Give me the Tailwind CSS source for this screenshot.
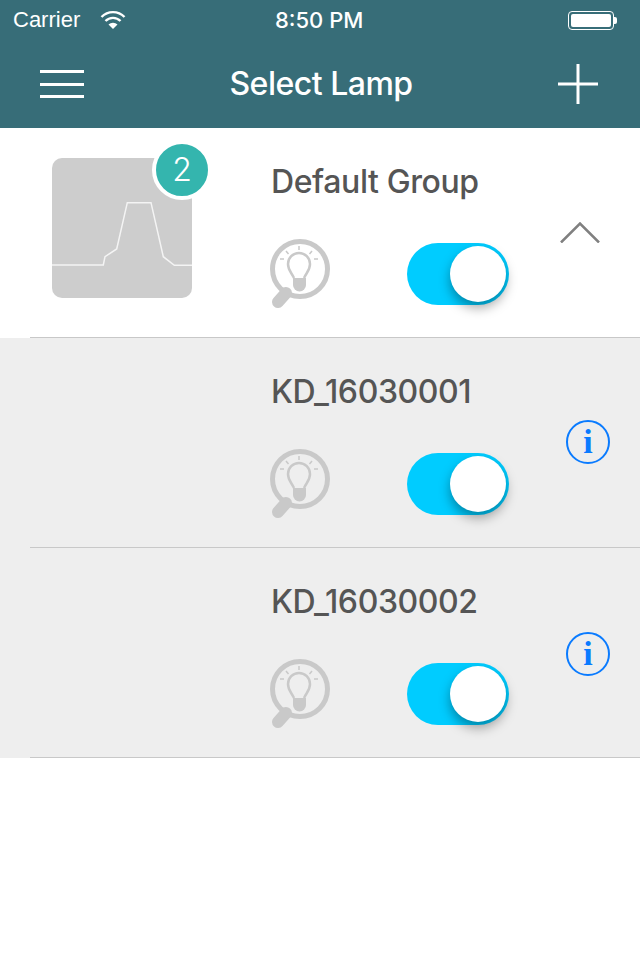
<!DOCTYPE html>
<html lang="en">
<head>
  <meta charset="UTF-8">
  <title>Select Lamp</title>
  <script src="https://cdn.jsdelivr.net/npm/@tailwindcss/browser@4"></script>
</head>
<body class="bg-white font-['Inter',sans-serif] w-[640px] h-[960px] overflow-hidden">
  <!-- header -->
  <header class="bg-[#376d78] h-[128px] text-white">
    <div class="relative flex items-center h-[40px] px-[13px] text-[22px] leading-[40px]">
      <span class="font-['Liberation_Sans',sans-serif] w-[87px]">Carrier</span>
      <svg class="w-[26px] h-[20px]" viewBox="0 0 26 20" fill="none" stroke="white" stroke-width="2.4">
        <path d="M1.5 7 A16 16 0 0 1 24.5 7" />
        <path d="M5.5 11 A10.500 10.500 0 0 1 20.500 11" />
        <path d="M13 19 L8.500 14.500 A6.500 6.500 0 0 1 17.500 14.500 Z" fill="white" stroke="none" />
      </svg>
      <span class="absolute left-[275px] top-0 font-medium text-[22px]">8:50 PM</span>
      <div class="ml-auto mr-[10px] flex items-center">
        <div class="w-[46px] h-[19px] border border-white rounded-[4px] p-[2px]"><div class="h-full bg-white rounded-[2px]"></div></div>
        <div class="w-[3px] h-[7px] bg-white rounded-r-[2px]"></div>
      </div>
    </div>
    <div class="flex items-center justify-between h-[88px] pl-[40px] pr-[42px]">
      <div class="w-[44px] flex flex-col gap-[9.500px]">
        <div class="h-[3px] bg-white"></div>
        <div class="h-[3px] bg-white"></div>
        <div class="h-[3px] bg-white"></div>
      </div>
      <h1 class="text-[32px] font-medium tracking-[-0.5px]">Select Lamp</h1>
      <svg class="w-[40px] h-[40px]" viewBox="0 0 40 40" stroke="white" stroke-width="3"><path d="M20 0V40M0 20H40" /></svg>
    </div>
  </header>

  <!-- group row -->
  <section class="bg-white">
    <div class="ml-[30px] h-[210px] border-b border-[#c8c8c8] flex">
      <div class="w-[241px] pl-[22px] pt-[30px]">
        <div class="relative w-[140px] h-[140px] bg-[#cdcdcd] rounded-[10px]">
          <svg class="w-[140px] h-[140px]" viewBox="0 0 140 140" fill="none" stroke="#f4f4f4" stroke-width="1.500">
            <path d="M0 107H51.300L53 98.700L64.700 91L75.300 44.700H99L111.300 98.700L122.300 107.300H140" />
          </svg>
          <div class="absolute left-[100px] top-[-18px] w-[60px] h-[60px] rounded-full bg-[#34b5ae] border-4 border-white flex items-center justify-center text-white text-[32px] font-light">2</div>
        </div>
      </div>
      <div class="w-[289px] pt-[32px]">
        <div class="text-[#555555] text-[32px] leading-[44px] font-medium tracking-[-0.4px]">Default Group</div>
        <div class="flex items-start mt-[35px]">
          <svg class="w-[60px] h-[70px] -ml-[1px]" viewBox="0 0 60 70" fill="none" stroke="#c9c9c9">
            <circle cx="30" cy="30" r="27.500" stroke-width="5" />
            <path d="M16 54L8 63" stroke-width="12" stroke-linecap="round" />
            <path d="M24 39C21 33 18 31 18 25A11 11 0 0 1 40 25C40 31 37 33 34 39" stroke-width="2.500" />
            <path d="M23 39H36V46A6.500 6.500 0 0 1 23 46Z" fill="#c9c9c9" stroke="none" />
            <path d="M29 7V11M16 12L18.500 15M42 12L39.500 15M10 20H14M44 20H48" stroke-width="1.500" />
          </svg>
          <div class="ml-[77px] mt-[4px] w-[102px] h-[62px] rounded-full bg-[#00ccff] p-[3px] pl-[43px]">
            <div class="w-[56px] h-[56px] rounded-full bg-white shadow-[0_6px_12px_rgba(0,0,0,0.35)]"></div>
          </div>
        </div>
      </div>
      <div class="pt-[94px] pl-[-1px]">
        <svg class="w-[40px] h-[21px]" viewBox="0 0 40 21" fill="none" stroke="#808080" stroke-width="2.500"><path d="M1 20.500L20 1.500L39 20.500" /></svg>
      </div>
    </div>
  </section>

  <!-- lamp rows -->
  <section class="bg-[#eeeeee]">
    <div class="ml-[30px] h-[210px] border-b border-[#c8c8c8] flex">
      <div class="w-[241px]"></div>
      <div class="w-[295px] pt-[32px]">
        <div class="text-[#555555] text-[32px] leading-[44px] font-medium tracking-[-0.4px]">KD_16030001</div>
        <div class="flex items-start mt-[35px]">
          <svg class="w-[60px] h-[70px] -ml-[1px]" viewBox="0 0 60 70" fill="none" stroke="#c9c9c9">
            <circle cx="30" cy="30" r="27.500" stroke-width="5" />
            <path d="M16 54L8 63" stroke-width="12" stroke-linecap="round" />
            <path d="M24 39C21 33 18 31 18 25A11 11 0 0 1 40 25C40 31 37 33 34 39" stroke-width="2.500" />
            <path d="M23 39H36V46A6.500 6.500 0 0 1 23 46Z" fill="#c9c9c9" stroke="none" />
            <path d="M29 7V11M16 12L18.500 15M42 12L39.500 15M10 20H14M44 20H48" stroke-width="1.500" />
          </svg>
          <div class="ml-[77px] mt-[4px] w-[102px] h-[62px] rounded-full bg-[#00ccff] p-[3px] pl-[43px]">
            <div class="w-[56px] h-[56px] rounded-full bg-white shadow-[0_6px_12px_rgba(0,0,0,0.35)]"></div>
          </div>
        </div>
      </div>
      <div class="pt-[82px]">
        <div class="w-[44px] h-[44px] rounded-full border-2 border-[#0a7bff] flex items-center justify-center text-[#0a7bff] text-[34px] font-['Liberation_Serif',serif] font-bold leading-none">i</div>
      </div>
    </div>
    <div class="ml-[30px] h-[210px] border-b border-[#c8c8c8] flex">
      <div class="w-[241px]"></div>
      <div class="w-[295px] pt-[32px]">
        <div class="text-[#555555] text-[32px] leading-[44px] font-medium tracking-[-0.4px]">KD_16030002</div>
        <div class="flex items-start mt-[35px]">
          <svg class="w-[60px] h-[70px] -ml-[1px]" viewBox="0 0 60 70" fill="none" stroke="#c9c9c9">
            <circle cx="30" cy="30" r="27.500" stroke-width="5" />
            <path d="M16 54L8 63" stroke-width="12" stroke-linecap="round" />
            <path d="M24 39C21 33 18 31 18 25A11 11 0 0 1 40 25C40 31 37 33 34 39" stroke-width="2.500" />
            <path d="M23 39H36V46A6.500 6.500 0 0 1 23 46Z" fill="#c9c9c9" stroke="none" />
            <path d="M29 7V11M16 12L18.500 15M42 12L39.500 15M10 20H14M44 20H48" stroke-width="1.500" />
          </svg>
          <div class="ml-[77px] mt-[4px] w-[102px] h-[62px] rounded-full bg-[#00ccff] p-[3px] pl-[43px]">
            <div class="w-[56px] h-[56px] rounded-full bg-white shadow-[0_6px_12px_rgba(0,0,0,0.35)]"></div>
          </div>
        </div>
      </div>
      <div class="pt-[84px]">
        <div class="w-[44px] h-[44px] rounded-full border-2 border-[#0a7bff] flex items-center justify-center text-[#0a7bff] text-[34px] font-['Liberation_Serif',serif] font-bold leading-none">i</div>
      </div>
    </div>
  </section>
</body>
</html>
